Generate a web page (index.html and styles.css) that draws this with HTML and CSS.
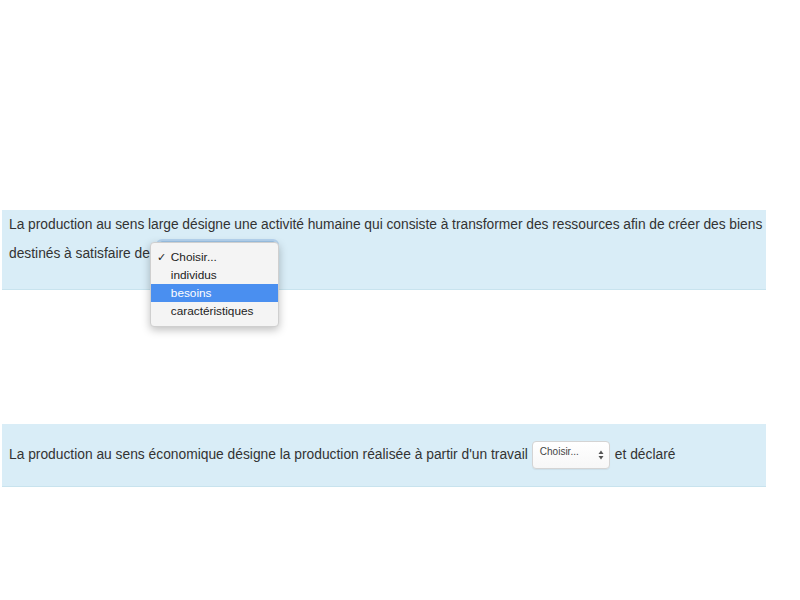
FILE: index.html
```html
<!DOCTYPE html>
<html lang="fr">
<head>
  <meta charset="UTF-8">
  <title>Questions</title>
  <link rel="stylesheet" href="styles.css">
</head>
<body class="qz-body">

<div class="qz-page">
  <div class="qz-question qz-first">
    <span class="qz-line">La production au sens large désigne une activité humaine qui consiste à transformer des ressources afin de créer des biens</span>
    destinés à satisfaire de<span class="qz-select-wrap">
      <span class="qz-select qz-select-focus qz-select-wide"></span>
      <span class="qz-menu">
        <span class="qz-menu-item"><span class="qz-check">✓</span>Choisir...</span>
        <span class="qz-menu-item">individus</span>
        <span class="qz-menu-item qz-menu-active">besoins</span>
        <span class="qz-menu-item">caractéristiques</span>
      </span>
    </span>
  </div>

  <div class="qz-question qz-second">
    La production au sens économique désigne la production réalisée à partir d'un travail<span class="qz-select">
      <span class="qz-select-text">Choisir...</span>
      <svg class="qz-arrows" width="6" height="10" viewBox="0 0 6 10">
        <path d="M3 0.5 L5.5 4 L0.5 4 Z" fill="#555"/>
        <path d="M3 9.5 L5.5 6 L0.5 6 Z" fill="#555"/>
      </svg>
    </span>et déclaré
  </div>
</div>

</body>
</html>
```

FILE: styles.css
```css
/* base */
.qz-body {
  margin: 0;
  padding: 0;
  background: #fff;
  font-family: "Liberation Sans", Arial, sans-serif;
  color: #333;
}

.qz-page {
  padding: 210px 34px 0 2px;
}

/* question blocks */
.qz-question {
  background-color: #d9edf7;
  border-bottom: 1px solid #c8e3ee;
  font-size: 13.8px;
  padding: 0 7px;
}

.qz-first {
  line-height: 29px;
  height: 80px;
  box-sizing: border-box;
  padding-right: 4px;
  word-spacing: -0.1px;
}

.qz-line {
  display: block;
  white-space: nowrap;
  word-spacing: -0.15px;
}

.qz-second {
  margin-top: 134px;
  line-height: 30px;
  height: 63px;
  box-sizing: border-box;
  padding-top: 16px;
}

/* select imitation */
.qz-select-wrap {
  position: relative;
  display: inline-block;
  vertical-align: middle;
  margin-left: 8px;
  word-spacing: normal;
}

.qz-select {
  position: relative;
  display: inline-block;
  vertical-align: middle;
  width: 78px;
  height: 28px;
  margin: 0 5px 0 4px;
  background: linear-gradient(#fff, #f7f7f7);
  border: 1px solid #d4d4d4;
  border-radius: 4px;
  box-sizing: border-box;
  box-shadow: 0 1px 1px rgba(0, 0, 0, .06);
}

.qz-select-wide {
  width: 119px;
  margin: 0;
}

.qz-select-focus {
  border-color: #9cc3e6;
  box-shadow: 0 0 0 2px #b5d3ef;
}

.qz-select-text {
  position: absolute;
  left: 7px;
  top: 4px;
  font-size: 10px;
  line-height: 12px;
  color: #444;
}

.qz-arrows {
  position: absolute;
  right: 5px;
  top: 8px;
}

/* open dropdown */
.qz-menu {
  position: absolute;
  left: -8px;
  top: 2px;
  width: 127px;
  padding: 5px 0 6px;
  background: #f4f4f4;
  border: 1px solid #cfcfcf;
  border-radius: 4px;
  box-shadow: 0 3px 8px rgba(0, 0, 0, .25);
  z-index: 2;
}

.qz-menu-item {
  display: block;
  height: 18px;
  line-height: 18px;
  padding-left: 20px;
  font-size: 11.8px;
  color: #222;
  position: relative;
}

.qz-menu-active {
  background: #4a8ff0;
  color: #fff;
}

.qz-check {
  position: absolute;
  left: 6px;
  font-size: 11px;
}
```
